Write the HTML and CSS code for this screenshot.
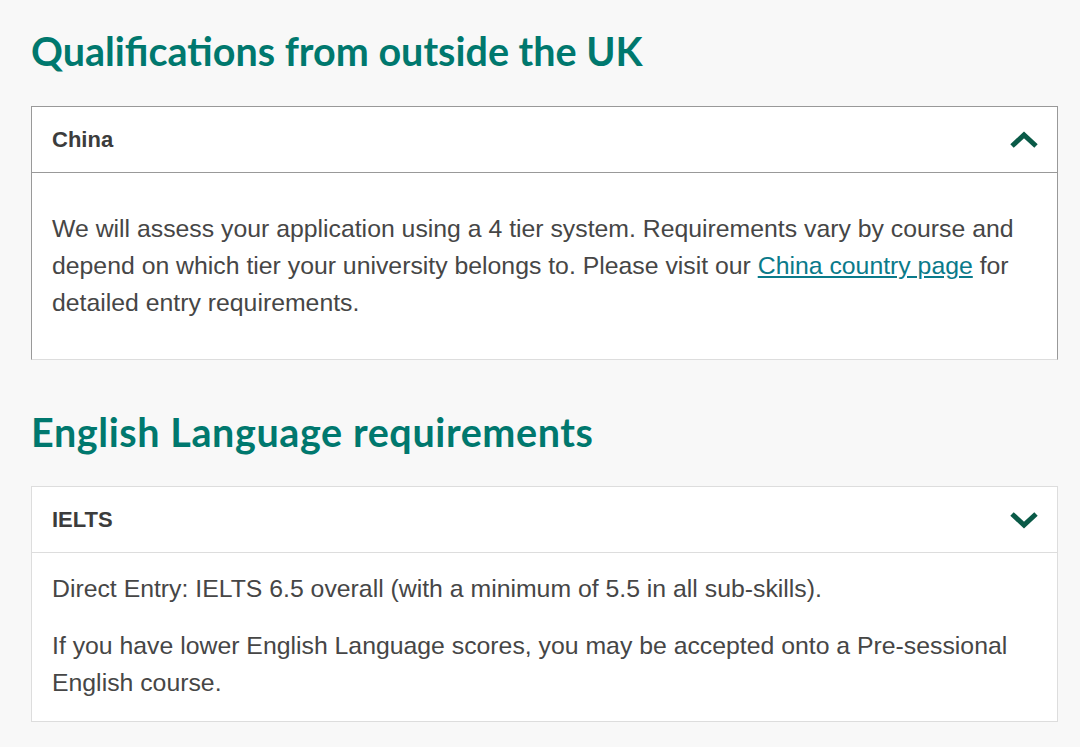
FILE: index.html
```html
<!DOCTYPE html>
<html lang="en">
<head>
    <meta charset="UTF-8">
    <meta name="viewport" content="width=device-width, initial-scale=1.0">
    <title>Entry requirements</title>
    <link rel="stylesheet" href="styles.css">
</head>
<body>
    <h2 class="section-title">Qualifications from outside the UK</h2>
    <div class="accordion open">
        <div class="accordion-header">
            <span>China</span>
            <svg class="chevron" width="30" height="20" viewBox="0 0 30 20"><path d="M3 16 L15 5 L27 16" fill="none" stroke="#0a5a47" stroke-width="5"/></svg>
        </div>
        <div class="accordion-body roomy">
            <p>We will assess your application using a 4 tier system. Requirements vary by course and depend on which tier your university belongs to. Please visit our <a href="#">China country page</a> for detailed entry requirements.</p>
        </div>
    </div>

    <h2 class="section-title second">English Language requirements</h2>
    <div class="accordion">
        <div class="accordion-header">
            <span>IELTS</span>
            <svg class="chevron" width="30" height="20" viewBox="0 0 30 20"><path d="M3 4 L15 15 L27 4" fill="none" stroke="#0a5a47" stroke-width="5"/></svg>
        </div>
        <div class="accordion-body">
            <p>Direct Entry: IELTS 6.5 overall (with a minimum of 5.5 in all sub-skills).</p>
            <p>If you have lower English Language scores, you may be accepted onto a Pre-sessional English course.</p>
        </div>
    </div>
</body>
</html>
```

FILE: styles.css
```css
body { margin: 0; padding: 0 22px 0 31px; background-color: #f8f8f8; font-family: "Liberation Sans", Arial, sans-serif; color: #464646; }
.section-title { font-family: Lato, "Open Sans", sans-serif; font-weight: 700; font-size: 39.5px; color: #00786e; margin: 0; padding-top: 28px; height: 106px; box-sizing: border-box; line-height: 46px; }
.section-title.second { padding-top: 49px; height: 126px; letter-spacing: 0.6px; }
.accordion { background-color: #fff; border: 1px solid #ddd; }
.accordion.open { border-color: #999; border-bottom-color: #ddd; }
.accordion-header { display: flex; justify-content: space-between; align-items: center; height: 65px; padding: 0 18px 0 20px; font-weight: bold; font-size: 22px; color: #3c3c3c; border-bottom: 1px solid #ddd; }
.accordion.open .accordion-header { border-bottom-color: #999; }
.accordion-body { padding: 17px 20px 20px; }
.accordion-body.roomy { padding: 37px 20px 38px; }
.accordion-body p { margin: 0; font-size: 24.8px; line-height: 37px; }
.accordion-body p + p { margin-top: 20px; }
.accordion-body a { color: #0a7a8a; text-decoration: underline; }
```
